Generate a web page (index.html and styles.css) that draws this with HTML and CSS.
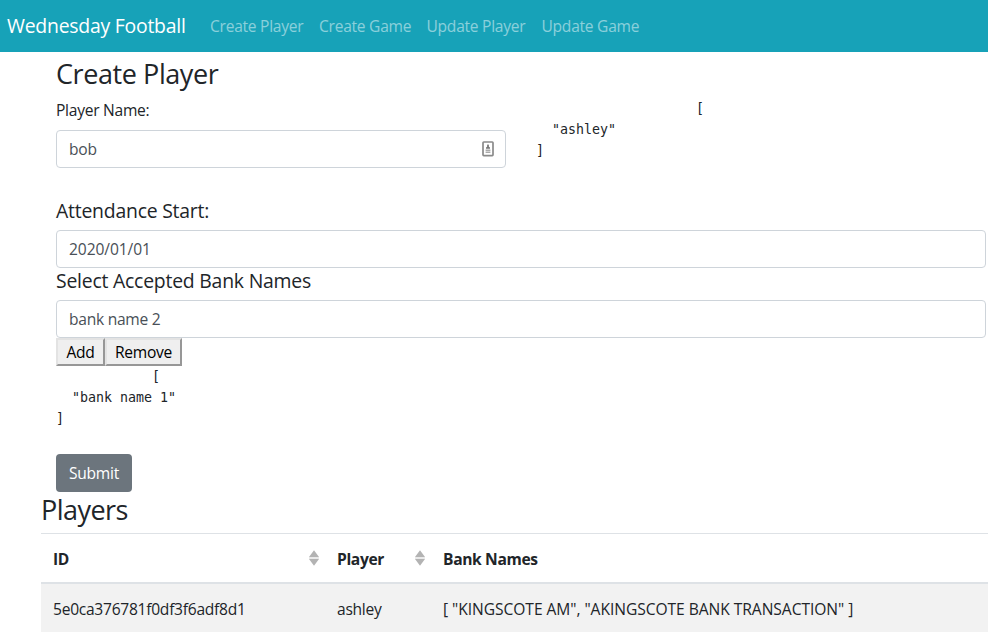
FILE: index.html
```html
<!DOCTYPE html>
<html lang="en">
<head>
<meta charset="utf-8">
<title>Wednesday Football</title>
<link rel="stylesheet" href="styles.css">
</head>
<body>
<nav class="navbar">
  <a class="brand">Wednesday Football</a>
  <a class="nav-link n1">Create Player</a>
  <a class="nav-link n2">Create Game</a>
  <a class="nav-link n3">Update Player</a>
  <a class="nav-link n4">Update Game</a>
</nav>
<main class="form">
  <h3 class="title">Create Player</h3>
  <div class="row">
    <div class="name-col">
      <label class="label">Player Name:</label>
      <div class="control name-control"><span>bob</span>
        <svg class="contact-icon" width="12" height="16" viewBox="0 0 12 16">
          <rect x="1" y="1" width="10" height="13.6" rx="0.8" fill="#fff" stroke="#8a8a8a" stroke-width="1.7"/>
          <path d="M6 3.1 6.9 4.2V5.7L8 6.5V7.8H4V6.5L5.1 5.7V4.2Z" fill="#777"/>
          <path d="M3.6 9.3H8.4M3.6 11.3H8.4" stroke="#aaa" stroke-width="1.4"/>
        </svg>
      </div>
    </div>
    <pre class="json">                    [
  "ashley"
]</pre>
  </div>
  <h5 class="heading">Attendance Start:</h5>
  <div class="control"><span class="date">2020/01/01</span></div>
  <h5 class="heading">Select Accepted Bank Names</h5>
  <div class="control"><span>bank name 2</span></div>
  <div class="buttons"><button class="plain add">Add</button><button class="plain remove">Remove</button></div>
  <pre class="json">            [
  "bank name 1"
]</pre>
  <button class="submit">Submit</button>
</main>
<section class="players">
  <h3 class="title">Players</h3>
  <div class="table">
    <div class="tr head">
      <div class="cell">ID<svg class="sort" width="10" height="16" viewBox="0 0 10 16"><path d="M0 7 5 0.3 10 7ZM0 9H10L5 15.7Z" fill="#b3b3b3"/><path d="M0 7H10V9H0Z" fill="#e9e9e9"/></svg></div>
      <div class="cell">Player<svg class="sort" width="10" height="16" viewBox="0 0 10 16"><path d="M0 7 5 0.3 10 7ZM0 9H10L5 15.7Z" fill="#b3b3b3"/><path d="M0 7H10V9H0Z" fill="#e9e9e9"/></svg></div>
      <div class="cell">Bank Names</div>
    </div>
    <div class="tr body">
      <div class="cell">5e0ca376781f0df3f6adf8d1</div>
      <div class="cell">ashley</div>
      <div class="cell list">[ "KINGSCOTE AM", "AKINGSCOTE BANK TRANSACTION" ]</div>
    </div>
  </div>
</section>
</body>
</html>
```
FILE: styles.css
```css
* { box-sizing: border-box; }
body {
  margin: 0;
  height: 640px;
  overflow: hidden;
  background: #fff;
  color: #212529;
  font: 15.6px/24px "Open Sans", sans-serif;
  letter-spacing: -0.27px;
}
h3, h5, pre { margin: 0; font-weight: 400; }
.navbar {
  display: flex;
  align-items: center;
  height: 52px;
  padding: 0 0 0 7px;
  background: #17a2b8;
}
.brand { width: 203px; color: #fff; font-size: 19.4px; letter-spacing: -0.23px; white-space: nowrap; }
.nav-link { color: rgba(255, 255, 255, .5); white-space: nowrap; }
.n1 { width: 109px; }
.n2 { width: 107.5px; }
.n3 { width: 115px; }
.form { padding: 5px 2px 0 56px; }
.title { height: 33px; font-size: 27px; line-height: 33px; letter-spacing: -0.42px; }
.row { display: flex; height: 108px; padding-top: 8px; }
.name-col { width: 450px; margin-right: 30px; }
.label { display: block; height: 32px; line-height: 25px; }
.control {
  display: flex;
  align-items: center;
  height: 38px;
  padding: 0 12px;
  border: 1px solid #ced4da;
  border-radius: 4px;
  color: #495057;
}
.date { letter-spacing: -0.1px; }
.name-control { justify-content: space-between; }
.contact-icon { margin-right: -1px; }
.json {
  font: 13.29px/21px "DejaVu Sans Mono", monospace;
  letter-spacing: 0;
}
.heading { height: 32px; padding-top: 1px; font-size: 19.4px; line-height: 24px; letter-spacing: -0.22px; }
.buttons { display: flex; height: 28px; }
.plain {
  height: 28px;
  padding: 0;
  border: 2px solid;
  border-color: #e3e3e3 #979797 #979797 #e3e3e3;
  background: #efefef;
  color: #000;
  font: inherit;
  letter-spacing: inherit;
}
.add { width: 49px; }
.remove { width: 77px; }
.submit {
  display: block;
  width: 76px;
  height: 38px;
  margin-top: 25px;
  padding: 0;
  border: 0;
  border-radius: 4px;
  background: #6c757d;
  color: #fff;
  font: inherit;
  letter-spacing: inherit;
}
.players { padding: 1px 0 0 41px; }
.players .title { letter-spacing: -0.55px; }
.table { margin-top: 7px; }
.tr { display: grid; grid-template-columns: 284px 106px 1fr; }
.head {
  height: 51px;
  border-top: 1px solid #dee2e6;
  border-bottom: 2px solid #dee2e6;
  font-weight: 700;
}
.body { height: 48px; background: #f2f2f2; }
.cell {
  display: flex;
  align-items: center;
  justify-content: space-between;
  padding: 1px 6px 0 12px;
  white-space: nowrap;
}
.list { letter-spacing: -0.05px; }
.head .cell { padding-top: 2px; letter-spacing: -0.35px; }
.sort { margin-top: -2px; }
```
